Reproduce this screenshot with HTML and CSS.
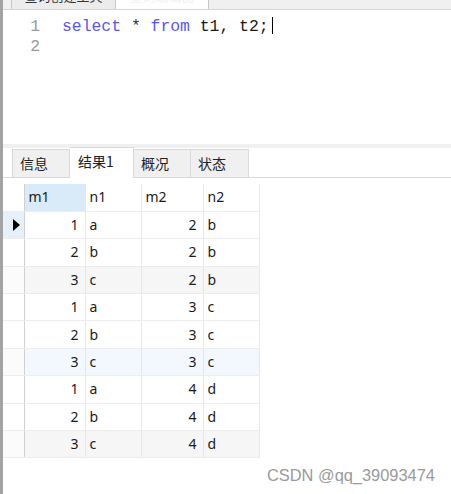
FILE: index.html
```html
<!DOCTYPE html>
<html>
<head>
<meta charset="utf-8">
<link rel="stylesheet" href="styles.css">
</head>
<body>
<div class="app">
  <div class="leftbar"></div>
  <div class="main">
    <div class="doc-tabs">
      <div class="doc-tab"><span class="doc-tab-text">查询创建工具</span></div>
      <div class="doc-tab active"><span class="doc-tab-text">查询编辑器</span></div>
    </div>
    <div class="editor">
      <div class="gutter">
        <div class="ln">1</div>
        <div class="ln">2</div>
      </div>
      <div class="code">
        <div class="line"><span class="kw">select</span> <span class="op">*</span> <span class="kw">from</span> t1, t2;<span class="caret"></span></div>
        <div class="line"></div>
      </div>
    </div>
    <div class="splitter"></div>
    <div class="results">
      <div class="res-tabs">
        <div class="res-tab">信息</div>
        <div class="res-tab active">结果1</div>
        <div class="res-tab">概况</div>
        <div class="res-tab">状态</div>
      </div>
      <table class="grid">
        <colgroup>
          <col class="c-ind"><col class="c-m1"><col class="c-n1"><col class="c-m2"><col class="c-n2">
        </colgroup>
        <thead>
          <tr><th class="ind"></th><th class="sel">m1</th><th>n1</th><th>m2</th><th>n2</th></tr>
        </thead>
        <tbody>
          <tr class="cur"><td class="ind"><span class="tri"></span></td><td class="num">1</td><td>a</td><td class="num">2</td><td>b</td></tr>
          <tr><td class="ind"></td><td class="num">2</td><td>b</td><td class="num">2</td><td>b</td></tr>
          <tr class="gray"><td class="ind"></td><td class="num">3</td><td>c</td><td class="num">2</td><td>b</td></tr>
          <tr><td class="ind"></td><td class="num">1</td><td>a</td><td class="num">3</td><td>c</td></tr>
          <tr><td class="ind"></td><td class="num">2</td><td>b</td><td class="num">3</td><td>c</td></tr>
          <tr class="blue"><td class="ind"></td><td class="num">3</td><td>c</td><td class="num">3</td><td>c</td></tr>
          <tr><td class="ind"></td><td class="num">1</td><td>a</td><td class="num">4</td><td>d</td></tr>
          <tr><td class="ind"></td><td class="num">2</td><td>b</td><td class="num">4</td><td>d</td></tr>
          <tr class="gray"><td class="ind"></td><td class="num">3</td><td>c</td><td class="num">4</td><td>d</td></tr>
        </tbody>
      </table>
    </div>
  </div>
  <div class="watermark">CSDN @qq_39093474</div>
</div>
</body>
</html>
```
FILE: styles.css
```css
html, body {
  margin: 0;
  padding: 0;
  background: #ffffff;
}
body {
  width: 451px;
  height: 494px;
  overflow: hidden;
  font-family: "Noto Sans", "Noto Sans CJK SC", sans-serif;
  font-size: 14px;
  color: #1a1a1a;
}
.app {
  position: relative;
  display: flex;
  width: 451px;
  height: 494px;
}
.leftbar {
  width: 3px;
  background: #a3a3a3;
  flex: none;
}
.main {
  flex: 1;
  display: flex;
  flex-direction: column;
  min-width: 0;
}
.doc-tabs {
  height: 9px;
  background: #f0f0f0;
  border-bottom: 1px solid #d6d6d6;
  display: flex;
  padding-left: 8px;
  overflow: hidden;
}
.doc-tab {
  width: 103px;
  height: 9px;
  background: #ececec;
  border-right: 1px solid #c9c9c9;
  border-left: 1px solid #c9c9c9;
  overflow: hidden;
  font-family: "Noto Sans CJK SC", sans-serif;
  font-size: 13px;
  color: #333;
  display: flex;
  justify-content: center;
}
.doc-tab.active {
  width: 92px;
  background: #ffffff;
  border-left: none;
  color: #f0f0f0;
}
.doc-tab-text {
  display: block;
  margin-top: -14px;
  line-height: 20px;
  white-space: nowrap;
}
.editor {
  height: 134px;
  display: flex;
  background: #ffffff;
  font-family: "Liberation Mono", monospace;
  font-size: 16.4px;
  padding-top: 7px;
  box-sizing: border-box;
}
.gutter {
  width: 37px;
  text-align: right;
  color: #9a9a9a;
}
.ln, .line {
  height: 20px;
  line-height: 20px;
}
.code {
  padding-left: 22px;
  color: #1a1a1a;
}
.line {
  white-space: pre;
}
.kw {
  color: #5757f0;
}
.op {
  color: #333;
}
.caret {
  display: inline-block;
  width: 1px;
  height: 17px;
  background: #000;
  vertical-align: -3px;
  margin-left: 3px;
}
.splitter {
  height: 4px;
  background: #f0f0f0;
}
.results {
  flex: 1;
  background: #ffffff;
}
.res-tabs {
  display: flex;
  align-items: flex-end;
  height: 30px;
  padding-left: 9px;
  border-bottom: 1px solid #d9d9d9;
  box-sizing: border-box;
}
.res-tab {
  height: 28px;
  box-sizing: border-box;
  background: #f0f0f0;
  border: 1px solid #d9d9d9;
  border-bottom: none;
  font-family: "Noto Sans CJK SC", sans-serif;
  font-size: 14px;
  line-height: 27px;
  padding-left: 7px;
  color: #222;
}
.res-tab:nth-child(1) { width: 58px; }
.res-tab:nth-child(2) { width: 64px; }
.res-tab:nth-child(3) { width: 57px; border-left: none; }
.res-tab:nth-child(4) { width: 58px; border-left: none; }
.res-tab.active {
  height: 31px;
  margin-bottom: -1px;
  background: #ffffff;
  border-left: none;
  line-height: 27px;
  padding-left: 8px;
}
.grid {
  margin-top: 6px;
  border-collapse: collapse;
  table-layout: fixed;
  width: 256px;
  font-family: "Noto Sans", sans-serif;
  font-size: 14px;
  color: #1a1a1a;
}
.c-ind { width: 21px; }
.c-m1 { width: 61px; }
.c-n1 { width: 56px; }
.c-m2 { width: 62px; }
.c-n2 { width: 56px; }
.grid th, .grid td {
  height: 27.4px;
  padding: 0 4px;
  box-sizing: border-box;
  border-right: 1px solid #e6e6e6;
  border-bottom: 1px solid #ececec;
  font-weight: normal;
  text-align: left;
  line-height: 26px;
}
.grid th {
  background: #ffffff;
}
.grid th.sel {
  background: #d9eaf8;
}
.grid .ind {
  padding: 0;
  border-right: 1px solid #d0d0d0;
  background: #ffffff;
}
.grid td.num {
  text-align: right;
  padding-right: 6px;
}
.grid tr.cur td.ind {
  background: #e6f0fa;
}
.grid tr.gray td {
  background: #f6f6f6;
}
.grid tr.blue td {
  background: #f2f8fd;
}
.grid tr.gray td.ind, .grid tr.blue td.ind {
  background: #fbfbfb;
}
.tri {
  display: block;
  width: 0;
  height: 0;
  margin-left: 10px;
  border-top: 6px solid transparent;
  border-bottom: 6px solid transparent;
  border-left: 7px solid #000;
}
.watermark {
  position: absolute;
  left: 267px;
  top: 465px;
  font-family: "Liberation Sans", sans-serif;
  font-size: 16.4px;
  color: #9a9a9a;
  line-height: 20px;
  white-space: nowrap;
}
```
